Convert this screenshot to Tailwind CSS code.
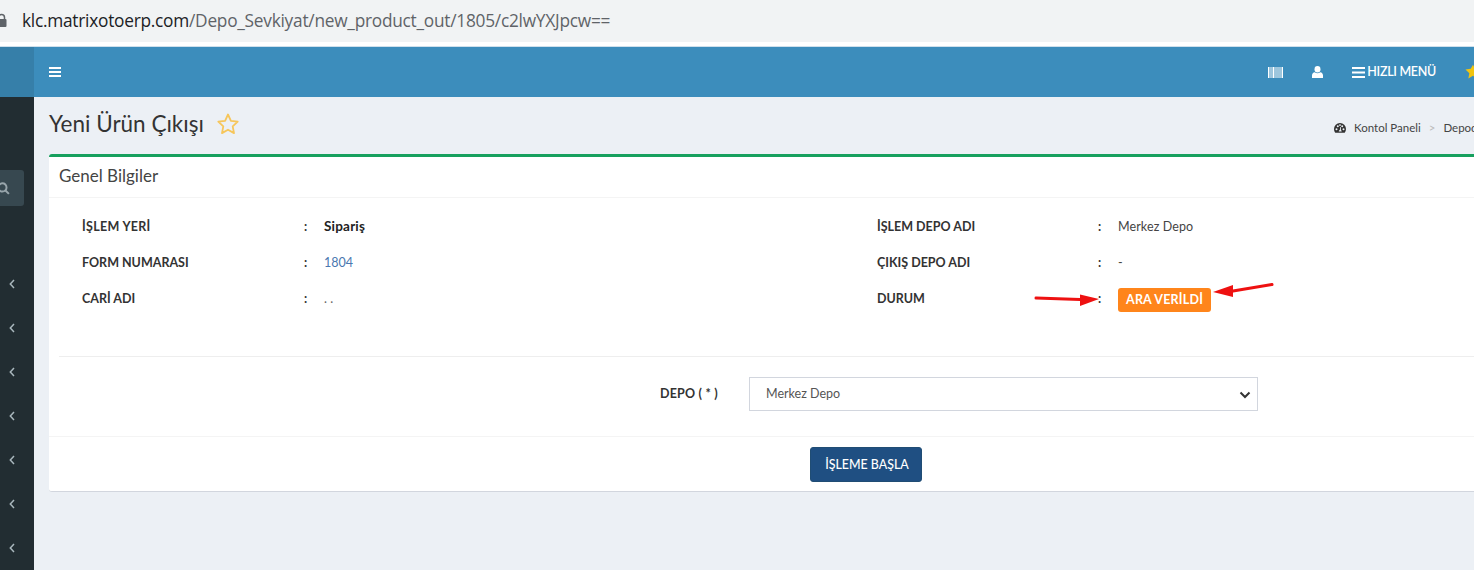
<!DOCTYPE html>
<html><head><meta charset="utf-8"><script src="https://cdn.jsdelivr.net/npm/@tailwindcss/browser@4"></script></head>
<body class="m-0 overflow-hidden bg-[#ecf0f5]">
<div class="relative flex h-[570px] w-[1474px] flex-col overflow-hidden font-['Lato','Noto_Sans',sans-serif] text-[#333]">
  <!-- browser address bar -->
  <div class="flex h-[42px] shrink-0 items-center bg-[#f1f3f4] pb-[1px]">
    <svg class="ml-[-4px] mr-[15px] h-[15px] w-[11px]" viewBox="0 0 11 15"><path d="M2.5 6V4.5a3 3 0 0 1 6 0V6" fill="none" stroke="#5f6368" stroke-width="1.5"/><rect x="0.5" y="6" width="10" height="8" rx="1" fill="#5f6368"/></svg>
    <span class="font-['Open_Sans',sans-serif] text-[17.3px] tracking-[-0.25px] text-[#5f6368]"><span class="text-[#202124]">klc.matrixotoerp.com</span>/Depo_Sevkiyat/new_product_out/1805/c2lwYXJpcw==</span>
  </div>
  <div class="h-[4px] shrink-0 bg-white"></div>
  <div class="h-[1px] shrink-0 bg-[#cfe0ec]"></div>
  <!-- top nav -->
  <header class="flex h-[50px] shrink-0 items-center bg-[#3c8dbc] text-white">
    <div class="h-full w-[34px] shrink-0 bg-[#367fa9]"></div>
    <svg class="ml-[15px] h-[10px] w-[12px]" viewBox="0 0 12 10" fill="#fff"><rect width="12" height="2"/><rect y="4" width="12" height="2"/><rect y="8" width="12" height="2"/></svg>
    <div class="ml-auto flex items-center">
      <svg class="h-[11px] w-[15px]" viewBox="0 0 15 11" fill="#fff"><path d="M0 0h1.500v11H0zM2.500 0h1v11h-1zM4.500 0h2v11h-2zM7.500 0h1v11h-1zM9.500 0h1v11h-1zM11.500 0h1v11h-1zM13.500 0h1.500v11h-1.500z"/></svg>
      <svg class="ml-[29px] h-[12px] w-[11px]" viewBox="0 0 11 12" fill="#fff"><ellipse cx="5.500" cy="3.200" rx="3" ry="3.200"/><path d="M0 12V9.200C0 7.600 1.200 6.500 2.700 6.200c1.600 1.300 4 1.300 5.600 0C9.800 6.500 11 7.600 11 9.200V12z"/></svg>
      <svg class="ml-[29px] h-[11px] w-[13px]" viewBox="0 0 13 11" fill="#fff"><rect width="13" height="2"/><rect y="4.500" width="13" height="2"/><rect y="9" width="13" height="2"/></svg>
      <span class="ml-[2px] text-[12.500px] font-semibold tracking-[-0.3px]">HIZLI MENÜ</span>
      <svg class="ml-[29px] mr-[-7px] h-[16px] w-[16px]" viewBox="0 0 24 24" fill="#f1c40f"><path d="M12 1l3.400 7.300 7.900 1-5.800 5.500 1.500 7.900L12 17.800l-7 3.900 1.500-7.900L.7 8.300l7.900-1z"/></svg>
    </div>
  </header>
  <div class="flex min-h-0 flex-1">
    <!-- sidebar -->
    <aside class="flex w-[34px] shrink-0 flex-col bg-[#222d32]">
      <div class="mt-[73px] flex h-[36px] w-[24px] items-center justify-end rounded-r-[3px] bg-[#374850] pr-[14px]">
        <svg class="h-[13px] w-[13px] shrink-0" viewBox="0 0 12 12" fill="none" stroke="#98a5ab" stroke-width="1.800"><circle cx="5" cy="5" r="3.800"/><path d="M7.800 7.800L11 11"/></svg>
      </div>
      <div class="mt-[73px] flex flex-col gap-[34px] pl-[9px]">
        <svg class="h-[10px] w-[6px]" viewBox="0 0 6 10" fill="none" stroke="#a9b7bd" stroke-width="1.500"><path d="M5 1L1.300 5 5 9"/></svg>
        <svg class="h-[10px] w-[6px]" viewBox="0 0 6 10" fill="none" stroke="#a9b7bd" stroke-width="1.500"><path d="M5 1L1.300 5 5 9"/></svg>
        <svg class="h-[10px] w-[6px]" viewBox="0 0 6 10" fill="none" stroke="#a9b7bd" stroke-width="1.500"><path d="M5 1L1.300 5 5 9"/></svg>
        <svg class="h-[10px] w-[6px]" viewBox="0 0 6 10" fill="none" stroke="#a9b7bd" stroke-width="1.500"><path d="M5 1L1.300 5 5 9"/></svg>
        <svg class="h-[10px] w-[6px]" viewBox="0 0 6 10" fill="none" stroke="#a9b7bd" stroke-width="1.500"><path d="M5 1L1.300 5 5 9"/></svg>
        <svg class="h-[10px] w-[6px]" viewBox="0 0 6 10" fill="none" stroke="#a9b7bd" stroke-width="1.500"><path d="M5 1L1.300 5 5 9"/></svg>
        <svg class="h-[10px] w-[6px]" viewBox="0 0 6 10" fill="none" stroke="#a9b7bd" stroke-width="1.500"><path d="M5 1L1.300 5 5 9"/></svg>
      </div>
    </aside>
    <!-- content -->
    <main class="min-w-0 flex-1 pl-[15px]">
      <div class="flex h-[57px] items-center">
        <h1 class="mt-[-2px] text-[22.500px] leading-none font-normal text-[#333]">Yeni Ürün Çıkışı</h1>
        <svg class="ml-[12px] mt-[-4px] h-[24px] w-[24px]" viewBox="0 0 24 24" fill="none" stroke="#f6c65b" stroke-width="1.800" stroke-linejoin="round"><path d="M12 2.500l2.900 6.300 6.800.8-5 4.700 1.300 6.800-6-3.400-6 3.400 1.300-6.800-5-4.700 6.800-.8z"/></svg>
        <div class="mt-[4px] ml-auto flex w-[140px] shrink-0 items-center overflow-hidden text-[11.500px] whitespace-nowrap text-[#444]">
          <svg class="mr-[8px] h-[12px] w-[12px] shrink-0" viewBox="0 0 12 12"><path fill="#333" fill-rule="evenodd" d="M6 1a6 6 0 0 0-6 6c0 1.400.5 2.700 1.300 3.700h9.400A6 6 0 0 0 12 7a6 6 0 0 0-6-6zM2.500 8.200a1 1 0 1 1 0-2 1 1 0 0 1 0 2zm1.300-3a1 1 0 1 1 0-2 1 1 0 0 1 0 2zM6 4a.9.9 0 1 1 0-1.800A.9.9 0 0 1 6 4zm3.500 4.200a1 1 0 1 1 0-2 1 1 0 0 1 0 2zm-1.300-3a1 1 0 1 1 0-2 1 1 0 0 1 0 2zM7.200 9.500H4.800c0-.9.400-1.500 1-1.600l.6-3h.6l-.1 3c.500.200.800.700.800 1.600z"/></svg>
          <span>Kontol Paneli</span><span class="mx-[8px] text-[#bbb]">&gt;</span><span>Depoda</span>
        </div>
      </div>
      <section class="w-[1440px] rounded-[3px] border-t-[3px] border-b border-t-[#17a05e] border-b-[#d2d6de] bg-white">
        <div class="flex h-[41px] items-center border-b border-[#f4f4f4] pb-[2px] pl-[10px] text-[17px] text-[#444]">Genel Bilgiler</div>
        <div class="relative ml-[10px] h-[159px] border-b border-[#eeeeee] text-[12.500px]">
          <div class="grid auto-rows-[36px] grid-cols-[222px_20px_553px_221px_20px_1fr] items-center pt-[11px] pl-[23px]">
            <b class="font-bold tracking-[0.3px]">İŞLEM YERİ</b><b>:</b><b class="mt-[-2px] text-[13.500px] font-bold tracking-[0.2px] text-[#222]">Sipariş</b>
            <b class="font-bold">İŞLEM DEPO ADI</b><b>:</b><span class="tracking-[0.1px] text-[#444]">Merkez Depo</span>
            <b class="font-bold">FORM NUMARASI</b><b>:</b><span class="text-[#4a78b0]">1804</span>
            <b class="font-bold">ÇIKIŞ DEPO ADI</b><b>:</b><span class="text-[#444]">-</span>
            <b class="font-bold">CARİ ADI</b><b>:</b><span class="text-[#666]">. .</span>
            <b class="font-bold">DURUM</b><b>:</b><span class="flex pt-[2px]"><span class="rounded-[3px] bg-[#ff851b] px-[8px] py-[4px] text-[12.500px] leading-[16px] font-bold tracking-[0.2px] text-white">ARA VERİLDİ</span></span>
          </div>
        </div>
        <div class="flex h-[80px] items-start border-b border-[#f4f4f4] pt-[20px]">
          <div class="flex items-center">
            <label class="ml-[611px] w-[89px] pt-[1px] text-[12.500px] font-bold tracking-[0.2px]">DEPO ( * )</label>
            <div class="flex h-[34px] w-[509px] items-center justify-between border border-[#d2d6de] pt-[1px] pr-[6px] pl-[16px] text-[12.500px] text-[#555]">
              <span>Merkez Depo</span>
              <svg class="h-[8px] w-[12px]" viewBox="0 0 12 8" fill="none" stroke="#333" stroke-width="2"><path d="M1.500 1.500L6 6l4.500-4.500"/></svg>
            </div>
          </div>
        </div>
        <div class="flex h-[54px] items-start pt-[10px]">
          <button class="ml-[761px] h-[35px] w-[112px] rounded-[3px] border border-[#204d74] bg-[#1f4f82] pt-[1px] pl-[2px] text-[12.400px] font-medium text-white">İŞLEME BAŞLA</button>
        </div>
      </section>
    </main>
  </div>
  <!-- annotation arrows -->
  <svg class="absolute top-[278px] left-[1030px] h-[30px] w-[250px]" viewBox="0 0 250 30" fill="#ee1111">
    <path d="M6 20L50 21.500" stroke="#ee1111" stroke-width="3" stroke-linecap="round" fill="none"/>
    <path d="M50 16.500L69 21 50 28z"/>
    <path d="M203 13L242 6.500" stroke="#ee1111" stroke-width="3" stroke-linecap="round" fill="none"/>
    <path d="M183 14L203 7 203 19z"/>
  </svg>
</div>
</body></html>
